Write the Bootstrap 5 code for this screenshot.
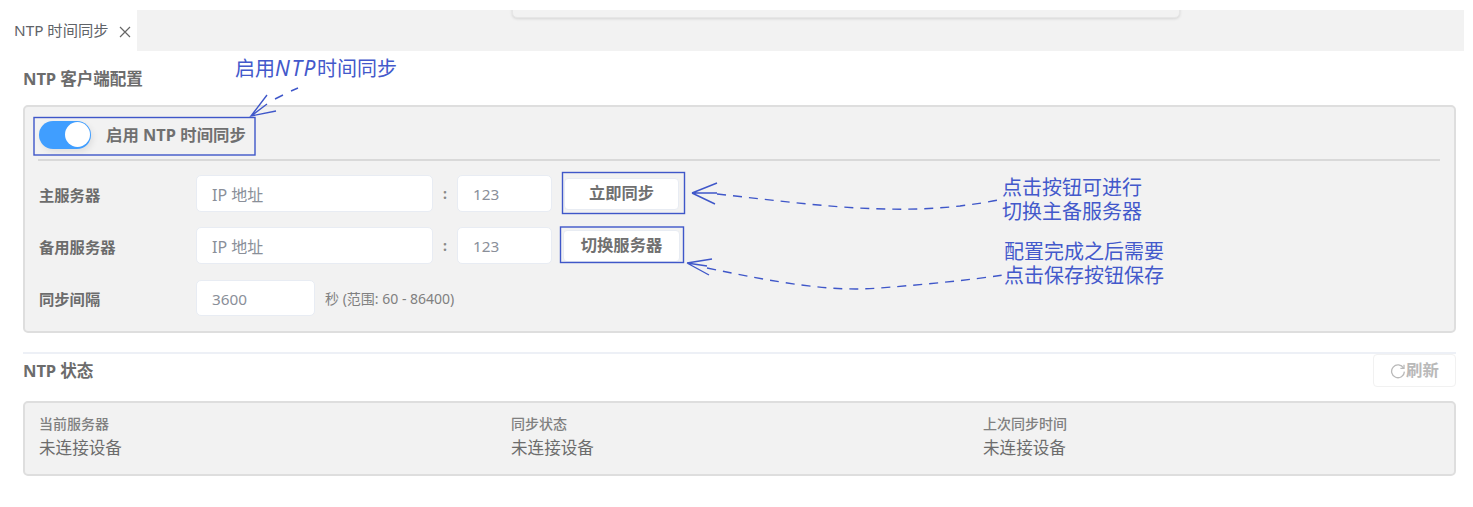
<!DOCTYPE html>
<html lang="zh">
<head>
<meta charset="utf-8">
<title>NTP 时间同步</title>
<link href="https://cdn.jsdelivr.net/npm/bootstrap@5.3.0/dist/css/bootstrap.min.css" rel="stylesheet">
<style>
html,body{height:507px;overflow:hidden}
body{background:#fff;color:#666;font-family:"Noto Sans","Noto Sans CJK SC",sans-serif;font-size:14px;position:relative;-webkit-font-smoothing:antialiased}
.tabstrip{margin-top:10px;margin-right:9px;height:41px}
.tabitem{width:137px;height:41px;padding:0 0 0 14px;font-size:15.3px;color:#5f6368}
.tabclose{margin-left:10px;width:12px;height:12px;margin-top:3px}
.tabrest{background:#f2f2f2;position:relative;overflow:hidden}
.scrap{position:absolute;left:375px;right:284px;top:-10px;height:18px;border:1px solid #e6e6e6;border-radius:5px;box-shadow:0 1px 3px rgba(0,0,0,.12);background:#f2f2f2}
.pagebody{padding:0 17px 0 23px}
.heading{font-size:16.6px;font-weight:700;color:#6c6c6c;line-height:22px;letter-spacing:-.1px}
.head1{margin-top:17px;margin-bottom:15px}
.panelbox{background:#f2f2f2;border:2px solid #dedede;border-radius:5px}
.panelmain{height:228px;padding:12px 14px 0 14px}
.switchrow{height:31px}
.switchtrack{width:52px;height:28px;border-radius:14px;background:#409eff;position:relative;box-shadow:2px 3px 6px rgba(0,0,0,.08)}
.switchknob{position:absolute;right:1px;top:1.5px;width:25px;height:25px;border-radius:50%;background:#fff}
.switchtext{margin-left:15px;margin-top:2px;font-size:16.4px;font-weight:700;color:#707070}
.rule{border-top:2px solid #d9d9d9;margin:9px 0 14px -1px}
.formline{height:37px;margin-bottom:15px}
.formlast{margin-top:16px;height:36px}
.formlabel{width:157px;margin-top:4px;font-size:15.3px;font-weight:700;color:#6c6c6c}
.fieldbox{height:37px;background:#fff;border:1px solid #e8ecf3;border-radius:5px;color:#8a8f99;font-size:15.3px;padding:0 0 0 15px;line-height:37px}
.fieldcjk{font-size:16px;line-height:39px}
.formlast .fieldbox{height:36px;line-height:36px}
.formlast .formlabel{margin-top:2px}
.fieldip{width:237px}
.fieldport{width:95px}
.fieldsec{width:119px}
.sep{width:24px;text-align:center;font-size:14px;font-weight:700;color:#888}
.actbtn{background:#fff;border:1px solid #e8ecf3;border-radius:4px;color:#707070;font-size:16.3px;font-weight:700;height:32px;padding:0;line-height:29px;text-align:center}
.act1{width:115px;margin-left:12px}
.act2{width:117px;margin-left:11px}
.hint{margin-left:10px;font-size:14px;color:#808080}
.sectop{margin-top:19px;border-top:2px solid #edf0f6;height:49px;position:relative}
.head2{margin-top:6px}
.refreshbtn{width:83px;height:33px;padding:0;background:#fff;border:1px solid #f1f1f1;border-radius:4px;color:#b9b9b9;font-size:16.4px;font-weight:700}
.panelstatus{height:75px;padding:11px 14px 0 14px}
.statcol{flex:0 0 472px}
.statlabel{font-size:14px;font-weight:500;color:#808080;line-height:20px}
.statvalue{font-size:16.6px;color:#6c6c6c;line-height:26px;margin-top:1px}
.overlay{position:absolute;left:0;top:0;width:1473px;height:507px;pointer-events:none}
.note{position:absolute;color:#4359cb;font-family:"Liberation Sans","Noto Sans CJK SC",sans-serif;font-size:20px;font-weight:400;white-space:nowrap}
.noteline{display:block;height:24px;line-height:24px}
.note1{left:235px;top:56px}
.note1 i{font-family:"Noto Sans",sans-serif;font-size:21px;letter-spacing:1.6px}
.note2{left:1002px;top:176px}
.note3{left:1004px;top:240px}
</style>
</head>
<body>
<div class="tabstrip d-flex">
  <div class="tabitem d-flex align-items-center flex-shrink-0">NTP 时间同步
    <svg class="tabclose" viewBox="0 0 12 12"><path d="M1 1l10 10M11 1L1 11" stroke="#666" stroke-width="1.2" fill="none"/></svg>
  </div>
  <div class="tabrest flex-grow-1"><div class="scrap"></div></div>
</div>
<div class="pagebody">
  <div class="heading head1">NTP 客户端配置</div>
  <div class="panelbox panelmain">
    <div class="switchrow d-flex align-items-center">
      <div class="switchtrack"><span class="switchknob"></span></div>
      <span class="switchtext">启用 NTP 时间同步</span>
    </div>
    <div class="rule"></div>
    <div class="formline d-flex align-items-center">
      <div class="formlabel">主服务器</div>
      <div class="fieldbox fieldip fieldcjk">IP 地址</div>
      <div class="sep">:</div>
      <div class="fieldbox fieldport">123</div>
      <button type="button" class="actbtn act1">立即同步</button>
    </div>
    <div class="formline d-flex align-items-center">
      <div class="formlabel">备用服务器</div>
      <div class="fieldbox fieldip fieldcjk">IP 地址</div>
      <div class="sep">:</div>
      <div class="fieldbox fieldport">123</div>
      <button type="button" class="actbtn act2">切换服务器</button>
    </div>
    <div class="formlast d-flex align-items-center">
      <div class="formlabel">同步间隔</div>
      <div class="fieldbox fieldsec">3600</div>
      <span class="hint">秒 (范围: 60 - 86400)</span>
    </div>
  </div>
  <div class="sectop d-flex justify-content-between align-items-start">
    <div class="heading head2">NTP 状态</div>
    <button type="button" class="refreshbtn d-flex align-items-center justify-content-center">
      <svg width="16" height="16" viewBox="0 0 16 16"><path d="M13.6 5.2A6.4 6.4 0 1 0 14.4 8.6" stroke="#b9b9b9" stroke-width="1.3" fill="none"/><path d="M14 1.8v3.6h-3.6" stroke="#b9b9b9" stroke-width="1.3" fill="none"/></svg>刷新
    </button>
  </div>
  <div class="panelbox panelstatus d-flex">
    <div class="statcol"><div class="statlabel">当前服务器</div><div class="statvalue">未连接设备</div></div>
    <div class="statcol"><div class="statlabel">同步状态</div><div class="statvalue">未连接设备</div></div>
    <div class="statcol"><div class="statlabel">上次同步时间</div><div class="statvalue">未连接设备</div></div>
  </div>
</div>

<svg class="overlay" viewBox="0 0 1473 507" fill="none" stroke="#3f57c9" stroke-width="1.4">
  <rect x="34" y="117.5" width="221" height="37.5"/>
  <rect x="562.5" y="172.5" width="122" height="41"/>
  <rect x="560.5" y="227" width="123" height="35.5"/>
  <path d="M298 88l-7 3M283 95l-8 4M267 104l-16 12M267 95l-16 21 25-5"/>
  <path d="M692 193l25-10M692 193l23 11M692 193h25" />
  <path d="M717 194C800 203 880 215 960 206C975 204 990 202 1003 199" stroke-dasharray="9 7"/>
  <path d="M687 263l25-4M687 263l22 12M687 263l20 3"/>
  <path d="M707 268C780 283 830 292 880 288C930 284 970 280 1003 275" stroke-dasharray="9 7"/>
</svg>
<div class="note note1"><span class="noteline">启用<i>NTP</i>时间同步</span></div>
<div class="note note2"><span class="noteline">点击按钮可进行</span><span class="noteline">切换主备服务器</span></div>
<div class="note note3"><span class="noteline">配置完成之后需要</span><span class="noteline">点击保存按钮保存</span></div>
<script src="https://cdn.jsdelivr.net/npm/bootstrap@5.3.0/dist/js/bootstrap.bundle.min.js"></script>
</body>
</html>
